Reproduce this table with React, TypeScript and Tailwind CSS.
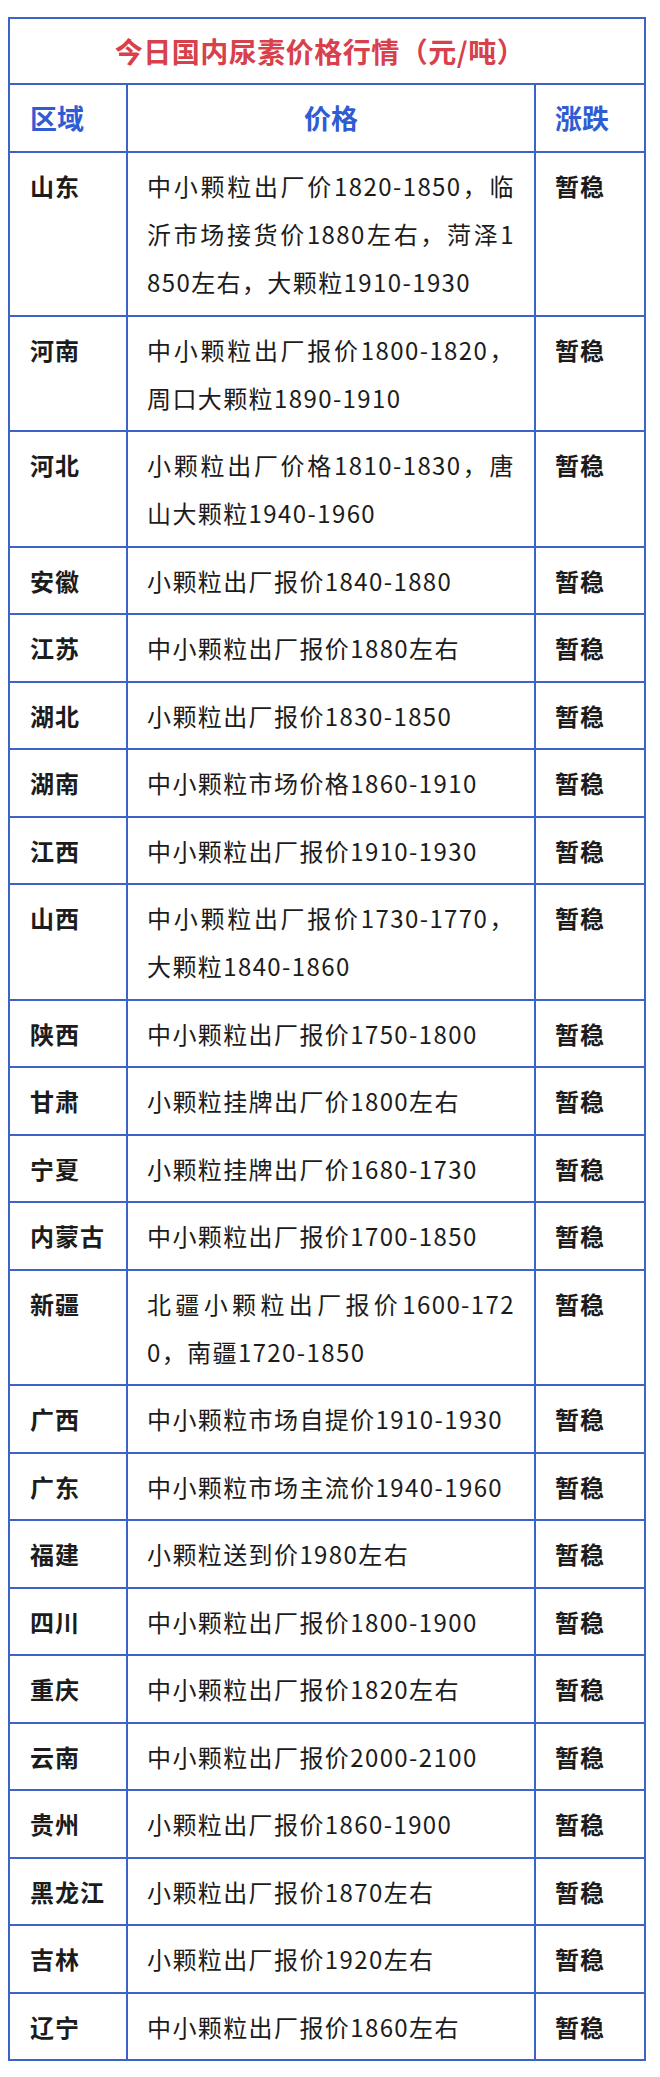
import React from 'react';

type Row = { region: string; lines: string[] };

const rows: Row[] = [
  { region: '山东', lines: ['中小颗粒出厂价1820-1850，临', '沂市场接货价1880左右，菏泽1', '850左右，大颗粒1910-1930'] },
  { region: '河南', lines: ['中小颗粒出厂报价1800-1820，', '周口大颗粒1890-1910'] },
  { region: '河北', lines: ['小颗粒出厂价格1810-1830，唐', '山大颗粒1940-1960'] },
  { region: '安徽', lines: ['小颗粒出厂报价1840-1880'] },
  { region: '江苏', lines: ['中小颗粒出厂报价1880左右'] },
  { region: '湖北', lines: ['小颗粒出厂报价1830-1850'] },
  { region: '湖南', lines: ['中小颗粒市场价格1860-1910'] },
  { region: '江西', lines: ['中小颗粒出厂报价1910-1930'] },
  { region: '山西', lines: ['中小颗粒出厂报价1730-1770，', '大颗粒1840-1860'] },
  { region: '陕西', lines: ['中小颗粒出厂报价1750-1800'] },
  { region: '甘肃', lines: ['小颗粒挂牌出厂价1800左右'] },
  { region: '宁夏', lines: ['小颗粒挂牌出厂价1680-1730'] },
  { region: '内蒙古', lines: ['中小颗粒出厂报价1700-1850'] },
  { region: '新疆', lines: ['北疆小颗粒出厂报价1600-172', '0，南疆1720-1850'] },
  { region: '广西', lines: ['中小颗粒市场自提价1910-1930'] },
  { region: '广东', lines: ['中小颗粒市场主流价1940-1960'] },
  { region: '福建', lines: ['小颗粒送到价1980左右'] },
  { region: '四川', lines: ['中小颗粒出厂报价1800-1900'] },
  { region: '重庆', lines: ['中小颗粒出厂报价1820左右'] },
  { region: '云南', lines: ['中小颗粒出厂报价2000-2100'] },
  { region: '贵州', lines: ['小颗粒出厂报价1860-1900'] },
  { region: '黑龙江', lines: ['小颗粒出厂报价1870左右'] },
  { region: '吉林', lines: ['小颗粒出厂报价1920左右'] },
  { region: '辽宁', lines: ['中小颗粒出厂报价1860左右'] },
];

const font = "font-['Noto_Sans_CJK_SC','Noto_Sans',sans-serif]";

export default function App() {
  return (
    <div className={`min-h-[2077px] w-[660px] bg-white pt-[17px] ${font}`}>
      <div className="ml-[8px] w-[638px] border-2 border-[#3d63c9]">
        <div className="flex h-[66px] items-center justify-center border-b-2 border-[#3d63c9] pr-[14px] text-[28px] font-bold tracking-[0.5px] text-[#d8404c]">
          今日国内尿素价格行情（元/吨）
        </div>

        <div className="grid grid-cols-[118px_408px_1fr] border-b-2 border-[#3d63c9] text-[27px] font-bold text-[#2f5bd3]">
          <div className="flex h-[66px] items-center border-r-2 border-[#3d63c9] pl-[20px]">区域</div>
          <div className="flex h-[66px] items-center justify-center border-r-2 border-[#3d63c9]">价格</div>
          <div className="flex h-[66px] items-center pl-[19px]">涨跌</div>
        </div>

        {rows.map((row, i) => (
          <div
            key={row.region}
            className={`grid grid-cols-[118px_408px_1fr] text-[24px] leading-[48px] tracking-[1.4px] text-[#1c1c1c] ${
              i < rows.length - 1 ? 'border-b-2 border-[#3d63c9]' : ''
            }`}
          >
            <div className="border-r-2 border-[#3d63c9] pb-[8.5px] pl-[20px] pt-[9px] font-bold tracking-[1px]">
              {row.region}
            </div>
            <div className="border-r-2 border-[#3d63c9] pb-[8.5px] pl-[19px] pr-[19px] pt-[9px]">
              {row.lines.map((line, j) => (
                <div
                  key={j}
                  className={`whitespace-nowrap ${
                    j < row.lines.length - 1 ? 'text-justify [text-align-last:justify]' : ''
                  }`}
                >
                  {line}
                </div>
              ))}
            </div>
            <div className="pb-[8.5px] pl-[19px] pt-[9px] font-bold tracking-[1px]">暂稳</div>
          </div>
        ))}
      </div>
    </div>
  );
}
